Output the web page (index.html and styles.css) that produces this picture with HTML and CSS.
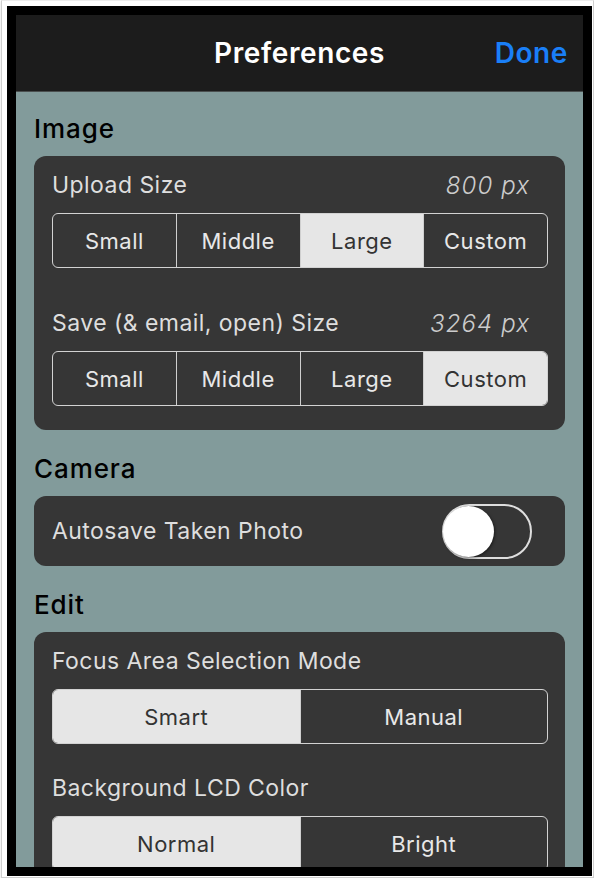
FILE: index.html
```html
<!DOCTYPE html>
<html lang="en">
<head>
    <meta charset="UTF-8">
    <meta name="viewport" content="width=device-width, initial-scale=1.0">
    <title>Preferences</title>
    <link rel="stylesheet" href="styles.css">
</head>
<body>
    <div class="shot">
        <div class="device">
            <div class="screen">
                <header class="nav">
                    <span></span>
                    <h1 class="nav-title">Preferences</h1>
                    <button class="nav-done">Done</button>
                </header>

                <div class="content">
                    <h2 class="section-title">Image</h2>
                    <div class="card">
                        <div class="row">
                            <span class="label">Upload Size</span>
                            <span class="value">800 px</span>
                        </div>
                        <div class="segment">
                            <div class="seg-item">Small</div>
                            <div class="seg-item">Middle</div>
                            <div class="seg-item selected">Large</div>
                            <div class="seg-item">Custom</div>
                        </div>
                        <div class="row row-spaced">
                            <span class="label">Save (&amp; email, open) Size</span>
                            <span class="value">3264 px</span>
                        </div>
                        <div class="segment">
                            <div class="seg-item">Small</div>
                            <div class="seg-item">Middle</div>
                            <div class="seg-item">Large</div>
                            <div class="seg-item selected">Custom</div>
                        </div>
                    </div>

                    <h2 class="section-title">Camera</h2>
                    <div class="card card-switch">
                        <span class="label">Autosave Taken Photo</span>
                        <div class="switch">
                            <div class="knob"></div>
                        </div>
                    </div>

                    <h2 class="section-title">Edit</h2>
                    <div class="card">
                        <div class="row">
                            <span class="label">Focus Area Selection Mode</span>
                        </div>
                        <div class="segment">
                            <div class="seg-item selected">Smart</div>
                            <div class="seg-item">Manual</div>
                        </div>
                        <div class="row row-near">
                            <span class="label">Background LCD Color</span>
                        </div>
                        <div class="segment">
                            <div class="seg-item selected">Normal</div>
                            <div class="seg-item">Bright</div>
                        </div>
                    </div>
                </div>
            </div>
        </div>
    </div>
</body>
</html>
```

FILE: styles.css
```css
body {
    margin: 0;
    background: #ffffff;
    font-family: 'Inter', 'Noto Sans', sans-serif;
}
.shot {
    margin-left: 1px;
    width: 586px;
    padding: 5px 0 1px 5px;
    border: 1px solid #cfcfcf;
    border-top-color: #ececec;
    box-shadow: 0 1px 2px rgba(0, 0, 0, 0.15);
}
.device {
    border: 9px solid #000000;
    width: 567px;
}
.screen {
    height: 852px;
    overflow: hidden;
    background: #829b9b;
}
.nav {
    display: grid;
    grid-template-columns: 1fr auto 1fr;
    align-items: center;
    height: 76px;
    padding: 0 15px;
    background: #1c1c1c;
    border-bottom: 1px solid #4a4f4f;
}
.nav-title {
    margin: 0;
    color: #ffffff;
    font-size: 28px;
    font-weight: 600;
    letter-spacing: 0.6px;
}
.nav-done {
    justify-self: end;
    padding: 0;
    border: none;
    background: none;
    color: #1a7ff7;
    font-family: inherit;
    font-size: 28px;
    font-weight: 600;
    letter-spacing: 0.6px;
    cursor: pointer;
}
.content {
    padding: 0 18px;
}
.section-title {
    margin: 21px 0 9px;
    color: #000000;
    font-size: 26px;
    font-weight: 500;
    line-height: 36px;
    letter-spacing: 0.9px;
}
.content > .section-title:first-child {
    margin-top: 19px;
}
.card {
    background: #363636;
    border-radius: 12px;
    padding: 10px 17px 24px 18px;
}
.row {
    display: flex;
    justify-content: space-between;
    align-items: center;
    height: 38px;
    margin-bottom: 9px;
    padding-right: 18px;
}
.row-spaced {
    margin-top: 36px;
}
.row-near {
    margin-top: 25px;
}
.label {
    color: #dedede;
    font-size: 23px;
    letter-spacing: 0.45px;
}
.value {
    color: #cccccc;
    font-size: 24px;
    font-style: italic;
    font-weight: 300;
    letter-spacing: 1.1px;
}
.segment {
    display: flex;
    box-sizing: border-box;
    height: 55px;
    border: 1.5px solid #d2d2d2;
    border-radius: 6px;
    overflow: hidden;
}
.seg-item {
    flex: 1;
    display: flex;
    align-items: center;
    justify-content: center;
    color: #e8e8e8;
    font-size: 22px;
    letter-spacing: 0.5px;
    border-left: 1px solid #cfcfcf;
}
.seg-item:first-child {
    border-left: none;
}
.seg-item.selected {
    background: #e6e6e6;
    color: #333333;
}
.card-switch {
    display: flex;
    justify-content: space-between;
    align-items: center;
    height: 70px;
    padding: 0 33px 0 18px;
    box-sizing: border-box;
}
.switch {
    width: 86px;
    height: 51px;
    border: 2px solid #dedede;
    border-radius: 28px;
    display: flex;
    align-items: center;
}
.knob {
    width: 51px;
    height: 51px;
    margin-left: -1px;
    border-radius: 50%;
    background: #ffffff;
    box-shadow: 1px 1px 3px rgba(0, 0, 0, 0.5);
}
```
